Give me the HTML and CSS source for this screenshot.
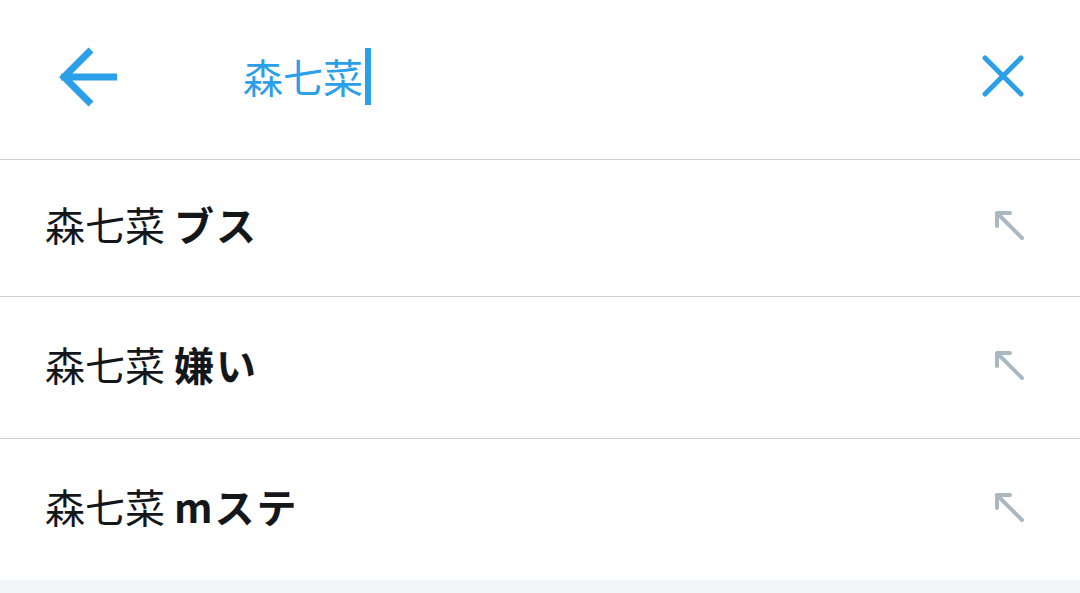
FILE: index.html
```html
<!DOCTYPE html>
<html lang="ja">
<head>
<meta charset="utf-8">
<link rel="stylesheet" href="styles.css">
</head>
<body>
<div class="app">
  <header class="search-bar">
    <svg class="back" width="64" height="64" viewBox="0 0 64 64">
      <path d="M6 31 H62 M36 4 L9 31 L36 58" fill="none" stroke="#2b9fe8" stroke-width="7" stroke-linejoin="miter"/>
    </svg>
    <div class="query"><span class="q-text">森七菜</span><span class="cursor"></span></div>
    <svg class="clear" width="44" height="44" viewBox="0 0 44 44">
      <path d="M4 4 L40 40 M40 4 L4 40" fill="none" stroke="#2b9fe8" stroke-width="5" stroke-linecap="round"/>
    </svg>
  </header>
  <ul class="suggestions">
    <li class="row r1"><span class="s-text">森七菜 <b>ブス</b></span><svg class="fill-icon" width="32" height="34" viewBox="0 0 32 34"><path d="M3 17 V4 H16 M3 4 L28 29" fill="none" stroke="#aab8c2" stroke-width="4" stroke-linecap="round" stroke-linejoin="round"/></svg></li>
    <li class="row"><span class="s-text">森七菜 <b>嫌い</b></span><svg class="fill-icon" width="32" height="34" viewBox="0 0 32 34"><path d="M3 17 V4 H16 M3 4 L28 29" fill="none" stroke="#aab8c2" stroke-width="4" stroke-linecap="round" stroke-linejoin="round"/></svg></li>
    <li class="row"><span class="s-text">森七菜 <b>mステ</b></span><svg class="fill-icon" width="32" height="34" viewBox="0 0 32 34"><path d="M3 17 V4 H16 M3 4 L28 29" fill="none" stroke="#aab8c2" stroke-width="4" stroke-linecap="round" stroke-linejoin="round"/></svg></li>
  </ul>
  <div class="footer-band"></div>
</div>
</body>
</html>
```
FILE: styles.css
```css
html, body {
  margin: 0;
  padding: 0;
  background: #ffffff;
}
body {
  font-family: "Noto Sans CJK JP", "Noto Sans", sans-serif;
  width: 1080px;
  height: 593px;
  overflow: hidden;
}
.app {
  display: flex;
  flex-direction: column;
  height: 593px;
}
.search-bar {
  height: 159px;
  border-bottom: 1px solid #cfd3d6;
  display: flex;
  align-items: center;
  padding: 0 55px 0 55px;
}
.back {
  flex: none;
  margin-top: -4px;
}
.query {
  flex: 1;
  display: flex;
  align-items: center;
  margin-left: 124px;
  height: 57px;
  margin-top: -6px;
}
.q-text {
  font-size: 40px;
  font-weight: 400;
  color: #2b9fe8;
  line-height: 56px;
  margin-top: -2px;
}
.cursor {
  width: 6px;
  height: 57px;
  background: #2b9fe8;
  margin-left: 2px;
}
.clear {
  flex: none;
  margin-top: -7px;
}
.suggestions {
  list-style: none;
  margin: 0;
  padding: 0;
}
.row {
  height: 141px;
  border-bottom: 1px solid #cfd3d6;
  display: flex;
  align-items: center;
  justify-content: space-between;
  padding: 0 54px 0 45px;
}
.row.r1 {
  height: 136px;
}
.row:last-child {
  border-bottom: none;
}
.s-text {
  font-size: 40px;
  color: #14171a;
  line-height: 56px;
  margin-top: -8px;
}
.s-text b {
  font-weight: 700;
  letter-spacing: 2px;
}
.fill-icon {
  flex: none;
  margin-top: -4px;
}
.footer-band {
  flex: 1;
  background: #f3f6f9;
}
```
